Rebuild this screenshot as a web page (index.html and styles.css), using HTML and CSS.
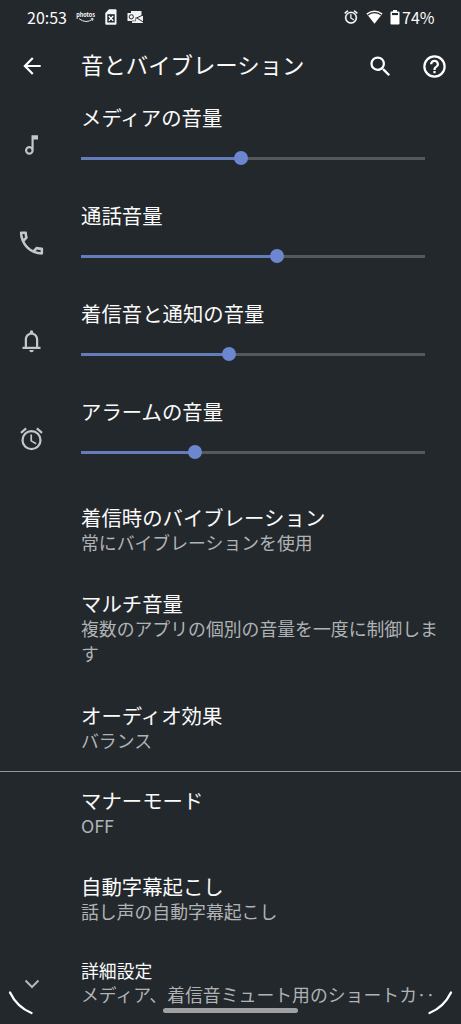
FILE: index.html
```html
<!DOCTYPE html>
<html lang="ja">
<head>
<meta charset="utf-8">
<title>音とバイブレーション</title>
<link rel="stylesheet" href="styles.css">
</head>
<body>
<div class="screen">
  <div class="status">
    <span class="clock">20:53</span>
    <span class="photos"><span class="photos-word">photos</span>
      <svg width="16" height="5" viewBox="0 0 16 5"><path d="M1 .7Q8 6 14.5 1.3M12.8.6l2.4.1-.7 2" fill="none" stroke="#e8eaeb" stroke-width="1"/></svg>
    </span>
    <svg class="sim" width="12" height="16" viewBox="0 0 12 16"><path d="M4 .3h6.5q1 0 1 1v13.4q0 1-1 1H1.3q-1 0-1-1V4z" fill="#f4f5f5"/><path d="M2.3 5.2h7.4v8.3H2.3z" fill="#23282c"/><path d="M3.8 7l4.4 4.8M8.2 7l-4.4 4.8" stroke="#fff" stroke-width="1.3"/></svg>
    <svg class="mail" width="17" height="14" viewBox="0 0 17 14"><path d="M4 1h10.5v5l1.5-.5v7.5H5v-2H.5V3H4z" fill="#f1f2f3"/><path d="M9 8.2l7.5-3.4M10 8l6.5 4.2" fill="none" stroke="#23282c" stroke-width="1"/><path d="M8.6 7.5v3.4H4.8" fill="none" stroke="#23282c" stroke-width=".6"/><circle cx="4.3" cy="6.8" r="2.1" fill="none" stroke="#23282c" stroke-width="1"/></svg>
    <span class="spacer"></span>
    <svg class="s-alarm" width="16" height="16" viewBox="0 0 24 24"><use href="#alarm"/></svg>
    <svg class="wifi" width="17" height="14" viewBox="0 0 17 14"><path d="M.4 3.6Q8.5-2.4 16.6 3.6L8.5 13.7z" fill="#fff"/><path d="M1.8 5Q8.5.3 15.2 5" fill="none" stroke="#23282c" stroke-width="1.1"/></svg>
    <svg class="battery" width="10" height="15" viewBox="0 0 10 15"><path d="M3 0h4v1.4h1.6q.9 0 .9.9v11.3q0 .9-.9.9H1.4q-.9 0-.9-.9V2.3q0-.9.9-.9H3z" fill="#fff"/><path d="M2 3h6v2.1H2z" fill="#23282c"/></svg>
    <span class="percent">74%</span>
  </div>

  <div class="bar">
    <svg width="26" height="26" viewBox="0 0 24 24" class="back"><path d="M20 11H7.83l5.59-5.59L12 4l-8 8 8 8 1.41-1.41L7.83 13H20z"/></svg>
    <h1>音とバイブレーション</h1>
    <svg width="27" height="27" viewBox="0 0 24 24" class="search"><path d="M15.5 14h-.79l-.28-.27A6.47 6.47 0 0 0 16 9.5 6.5 6.5 0 1 0 9.5 16c1.61 0 3.09-.59 4.23-1.57l.27.28v.79l5 4.99L20.49 19zm-6 0A4.5 4.5 0 1 1 14 9.5 4.5 4.5 0 0 1 9.5 14z"/></svg>
    <svg width="27" height="27" viewBox="0 0 24 24" class="help"><path d="M11 18h2v-2h-2zm1-16a10 10 0 1 0 0 20 10 10 0 0 0 0-20zm0 18a8 8 0 1 1 0-16 8 8 0 0 1 0 16zm0-14a4 4 0 0 0-4 4h2a2 2 0 1 1 4 0c0 2-3 1.75-3 5h2c0-2.25 3-2.5 3-5a4 4 0 0 0-4-4z"/></svg>
  </div>

  <div class="volumes">
    <div class="volume">
      <svg class="icon" width="26" height="26" viewBox="0 0 24 24"><path d="M12 3v10.55A4 4 0 1 0 14 17V7h4V3zm-2 16a2 2 0 1 1 0-4 2 2 0 0 1 0 4z"/></svg>
      <div class="control"><div class="title">メディアの音量</div><div class="track"><div class="fill" style="width:46.5%"></div><div class="thumb"></div></div></div>
    </div>
    <div class="volume">
      <svg class="icon" width="31" height="31" viewBox="0 0 24 24"><path d="M6.54 5c.06.89.21 1.76.45 2.59l-1.2 1.2A14.9 14.9 0 0 1 5.03 5zm9.86 12.02c.85.24 1.72.39 2.6.45v1.49a15.3 15.3 0 0 1-3.8-.75zM7.5 3H4a1 1 0 0 0-1 1 17 17 0 0 0 17 17 1 1 0 0 0 1-1v-3.49a1 1 0 0 0-1-1 11.4 11.4 0 0 1-3.57-.57 1 1 0 0 0-1.02.24l-2.2 2.2a15.05 15.05 0 0 1-6.59-6.59l2.2-2.2a1 1 0 0 0 .25-1.02A11.4 11.4 0 0 1 8.5 4a1 1 0 0 0-1-1z"/></svg>
      <div class="control"><div class="title">通話音量</div><div class="track"><div class="fill" style="width:57.1%"></div><div class="thumb"></div></div></div>
    </div>
    <div class="volume">
      <svg class="icon" width="27" height="27" viewBox="0 0 24 24"><path d="M18 17v-6c0-3.07-1.63-5.64-4.5-6.32V4a1.5 1.5 0 0 0-3 0v.68C7.64 5.36 6 7.92 6 11v6H4v2h16v-2zm-2 0H8v-6c0-2.48 1.51-4.5 4-4.5s4 2.02 4 4.5zm-4 5a2 2 0 0 0 2-2h-4a2 2 0 0 0 2 2z"/></svg>
      <div class="control"><div class="title">着信音と通知の音量</div><div class="track"><div class="fill" style="width:43%"></div><div class="thumb"></div></div></div>
    </div>
    <div class="volume">
      <svg class="icon" width="27" height="27" viewBox="0 0 24 24"><path id="alarm" d="M22 5.72l-4.6-3.86-1.29 1.53 4.6 3.86zM7.88 3.39L6.6 1.86 2 5.71l1.29 1.53zM12.5 8H11v6l4.75 2.85.75-1.23-4-2.37zM12 4a9 9 0 1 0 0 18 9 9 0 0 0 0-18zm0 16a7 7 0 1 1 0-14 7 7 0 0 1 0 14z"/></svg>
      <div class="control"><div class="title">アラームの音量</div><div class="track"><div class="fill" style="width:33.1%"></div><div class="thumb"></div></div></div>
    </div>
  </div>

  <div class="list">
    <div class="item"><div class="title">着信時のバイブレーション</div><div class="summary">常にバイブレーションを使用</div></div>
    <div class="item"><div class="title">マルチ音量</div><div class="summary">複数のアプリの個別の音量を一度に制御します</div></div>
    <div class="item ruled"><div class="title">オーディオ効果</div><div class="summary">バランス</div></div>
    <div class="item"><div class="title">マナーモード</div><div class="summary">OFF</div></div>
    <div class="item"><div class="title">自動字幕起こし</div><div class="summary">話し声の自動字幕起こし</div></div>
    <div class="item advanced">
      <svg class="chevron" width="16" height="10" viewBox="0 0 16 10"><path d="M1.5 1.5L8 8l6.5-6.5" fill="none" stroke="#b4b7b9" stroke-width="2"/></svg>
      <div class="title small">詳細設定</div><div class="summary">メディア、着信音ミュート用のショートカ‥</div>
    </div>
  </div>

  <svg class="corner left" width="26" height="26" viewBox="0 0 26 26"><path d="M2 2.5Q9 17 23.5 23" /></svg>
  <svg class="corner right" width="26" height="26" viewBox="0 0 26 26"><path d="M24 2.5Q17 17 2.5 23" /></svg>
  <div class="home"></div>
</div>
</body>
</html>
```
FILE: styles.css
```css
* { box-sizing: border-box; }
body { margin: 0; background: #23282c; }
svg { display: block; flex: none; fill: #fff; }
.screen {
  position: relative;
  width: 461px;
  height: 1024px;
  overflow: hidden;
  background: #23282c;
  color: #fafafa;
  font-family: "Noto Sans CJK JP", sans-serif;
}
.status {
  display: flex;
  align-items: center;
  height: 34px;
  padding: 0 27px 0 27px;
  font-size: 16px;
  line-height: 34px;
}
.clock { width: 50px; }
.photos {
  display: flex;
  flex-direction: column;
  align-items: center;
  width: 17px;
}
.photos-word { font-size: 5.5px; font-weight: 700; line-height: 6px; }
.sim { margin-left: 11px; }
.mail { margin-left: 10px; }
.spacer { flex: 1; }
.s-alarm { stroke: #fff; stroke-width: .4; }
.wifi { margin-left: 7px; }
.battery { margin: 0 2px 0 7px; }
.percent { width: 32px; }
.bar {
  display: flex;
  align-items: center;
  height: 64px;
  padding: 0 13px 0 19px;
}
.bar h1 {
  flex: 1;
  margin: 0 0 4px 36px;
  font-size: 22.4px;
  font-weight: 400;
  line-height: 32px;
}
.help { margin-left: 27px; }
.volumes { height: 389px; }
.volume { display: flex; height: 98px; padding-right: 36px; }
.volume .icon {
  width: 63px;
  margin-top: 47px;
  transform: translateY(-50%);
  fill: #c4c6c8;
}
.control { flex: 1; margin-left: 18px; padding-top: 6px; }
.title { font-size: 20.4px; line-height: 26px; white-space: nowrap; }
.track {
  display: flex;
  align-items: center;
  height: 15px;
  margin-top: 21px;
  background: linear-gradient(#56595c, #56595c) center / 100% 3px no-repeat;
}
.fill { height: 3px; background: #657cba; }
.thumb { align-self: flex-start; width: 14px; height: 14px; margin-left: -7px; border-radius: 50%; background: #6c86d0; }
.item { padding: 17px 20px 18px 81px; }
.item .summary { color: #b0b3b5; font-size: 17.85px; line-height: 25px; }
.item.ruled { padding-top: 18px; border-bottom: 1px solid #94979a; }
.ruled + .item { padding-top: 15px; }
.title.small { font-size: 17.85px; line-height: 24px; }
.advanced { position: relative; padding-top: 16px; white-space: nowrap; }
.advanced .summary { line-height: 24px; }
.chevron { position: absolute; left: 24px; top: 37px; }
.corner { position: absolute; bottom: 8px; fill: none; stroke: #fff; stroke-width: 2.3; stroke-linecap: round; }
.left { left: 8px; }
.right { right: 8px; }
.home {
  position: absolute;
  left: 163px;
  bottom: 11px;
  width: 135px;
  height: 5px;
  border-radius: 3px;
  background: #9fa1a3;
}
```
